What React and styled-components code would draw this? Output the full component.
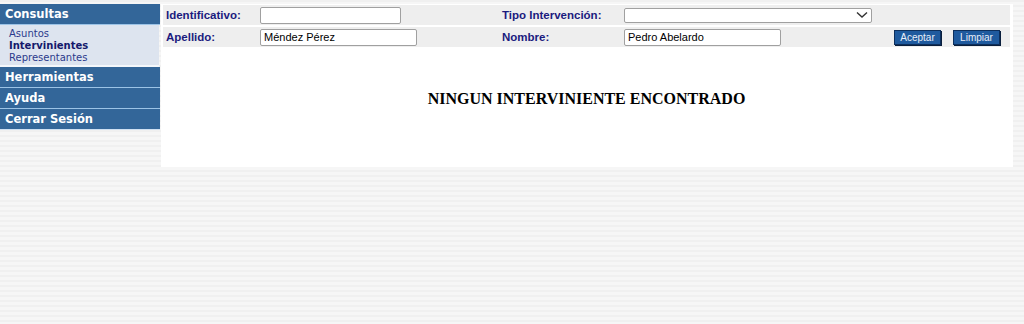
import React from "react";
import styled, { createGlobalStyle } from "styled-components";

const GlobalStyle = createGlobalStyle`
  html, body {
    margin: 0;
    padding: 0;
    height: 100%;
  }
  body {
    background-color: #f4f4f4;
    background-image: repeating-linear-gradient(
      to bottom,
      #f0f0f0 0px,
      #f0f0f0 2px,
      #f6f6f6 2px,
      #f6f6f6 5px
    );
    font-family: "Liberation Sans", Arial, sans-serif;
  }
`;

const Page = styled.div`
  display: flex;
  align-items: flex-start;
  padding-top: 4px;
`;

const Sidebar = styled.nav`
  width: 160px;
  display: flex;
  flex-direction: column;
  font-family: "DejaVu Sans", Verdana, sans-serif;
`;

const MenuHeader = styled.div`
  height: 20px;
  line-height: 20px;
  padding-left: 5px;
  background: #336699;
  color: #ffffff;
  font-size: 11.5px;
  font-weight: bold;
  border-bottom: 1px solid ${(p) => (p.last ? "#cfe0f2" : "#9cc3e6")};
`;

const SubMenu = styled.div`
  background: #dde4ef;
  padding: 3px 0 1px 9px;
  display: flex;
  flex-direction: column;
  border-bottom: 2px solid #f4f7fb;
  margin-right: 1px;
`;

const SubItem = styled.a`
  font-size: 10px;
  line-height: 12px;
  color: ${(p) => (p.active ? "#14196b" : "#2b3a8c")};
  font-weight: ${(p) => (p.active ? "bold" : "normal")};
  text-decoration: none;
`;

const Main = styled.main`
  margin-left: 1px;
  width: 852px;
  height: 163px;
  background: #ffffff;
  padding: 1px 3px 0 2px;
  box-sizing: border-box;
`;

const Form = styled.form`
  display: flex;
  flex-direction: column;
  gap: 2px;
`;

const Row = styled.div`
  display: grid;
  grid-template-columns: 95px 241px 123px 266px 1fr;
  align-items: center;
  height: 20px;
  background: #eeeeee;
`;

const Label = styled.label`
  padding-left: 3px;
  color: #1b1b7e;
  font-size: 11.5px;
  font-weight: bold;
`;

const Input = styled.input`
  box-sizing: border-box;
  width: ${(p) => p.w}px;
  height: 17px;
  margin-left: 2px;
  padding: 0 3px;
  border: 1px solid #a0a0a0;
  border-radius: 2px;
  background: #ffffff;
  font-family: "Liberation Sans", Arial, sans-serif;
  font-size: 11px;
  color: #000000;
  outline: none;
`;

const SelectBox = styled.div`
  grid-column: 4 / span 2;
  box-sizing: border-box;
  width: 248px;
  height: 15px;
  margin-left: 2px;
  border: 1px solid #a0a0a0;
  border-radius: 2px;
  background: #ffffff;
  display: flex;
  justify-content: flex-end;
  align-items: center;
  padding-right: 3px;
`;

const Buttons = styled.div`
  display: flex;
  justify-content: flex-end;
  gap: 12px;
  padding-right: 10px;
`;

const Button = styled.button`
  box-sizing: border-box;
  width: 47px;
  height: 15px;
  padding: 0;
  background: #1f5a9e;
  color: #e8eef8;
  border: 1px solid #0d2f5c;
  box-shadow: 1px 1px 0 #0a1f3d;
  font-family: "Liberation Sans", Arial, sans-serif;
  font-size: 10px;
  line-height: 13px;
`;

const Message = styled.h2`
  margin: 43px 0 0;
  text-align: center;
  font-family: "Liberation Serif", "Times New Roman", serif;
  font-size: 16px;
  font-weight: bold;
  color: #000000;
`;

const Chevron = () => (
  <svg width="12" height="8" viewBox="0 0 12 8">
    <path d="M1 1.5 L6 6 L11 1.5" fill="none" stroke="#333" strokeWidth="1.4" />
  </svg>
);

export default function App() {
  return (
    <>
      <GlobalStyle />
      <Page>
        <Sidebar>
          <MenuHeader>Consultas</MenuHeader>
          <SubMenu>
            <SubItem>Asuntos</SubItem>
            <SubItem active>Intervinientes</SubItem>
            <SubItem>Representantes</SubItem>
          </SubMenu>
          <MenuHeader>Herramientas</MenuHeader>
          <MenuHeader>Ayuda</MenuHeader>
          <MenuHeader last>Cerrar Sesión</MenuHeader>
        </Sidebar>
        <Main>
          <Form onSubmit={(e) => e.preventDefault()}>
            <Row>
              <Label>Identificativo:</Label>
              <Input w={141} defaultValue="" />
              <Label>Tipo Intervención:</Label>
              <SelectBox>
                <Chevron />
              </SelectBox>
            </Row>
            <Row>
              <Label>Apellido:</Label>
              <Input w={157} defaultValue="Méndez Pérez" />
              <Label>Nombre:</Label>
              <Input w={157} defaultValue="Pedro Abelardo" />
              <Buttons>
                <Button type="submit">Aceptar</Button>
                <Button type="button">Limpiar</Button>
              </Buttons>
            </Row>
          </Form>
          <Message>NINGUN INTERVINIENTE ENCONTRADO</Message>
        </Main>
      </Page>
    </>
  );
}
